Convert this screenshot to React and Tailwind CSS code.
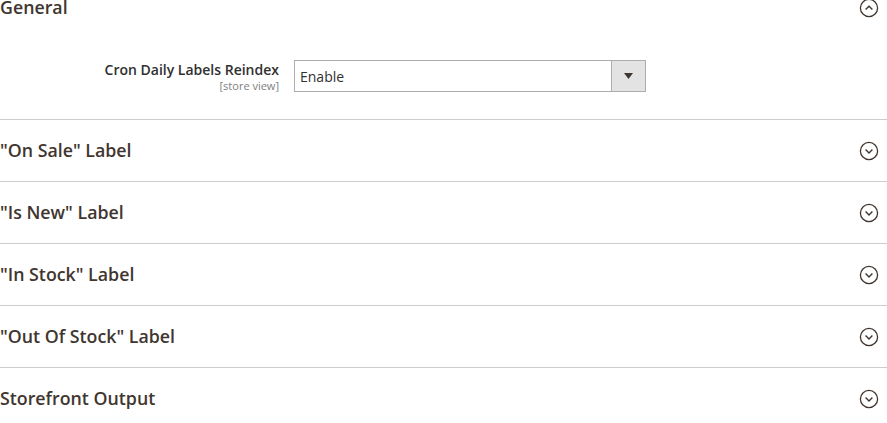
import React from 'react';

const sections = ['"On Sale" Label', '"Is New" Label', '"In Stock" Label', '"Out Of Stock" Label', 'Storefront Output'];

function ToggleIcon({ open }) {
  return (
    <svg width="20" height="20" viewBox="0 0 20 20" className="shrink-0">
      <circle cx="10" cy="10" r="8.6" fill="none" stroke="#41362f" strokeWidth="1.3" />
      {open ? (
        <path d="M6.6 11.6 L10 8.2 L13.4 11.6" fill="none" stroke="#41362f" strokeWidth="1.4" />
      ) : (
        <path d="M6.6 8.6 L10 12 L13.4 8.6" fill="none" stroke="#41362f" strokeWidth="1.4" />
      )}
    </svg>
  );
}

function SectionHeader({ title, open }) {
  return (
    <div className="h-[61px] flex items-center justify-between pr-[8px]">
      <span className="text-[17.8px] font-semibold text-[#41362f]">{title}</span>
      <ToggleIcon open={open} />
    </div>
  );
}

export default function App() {
  return (
    <div className="w-[887px] h-[423px] overflow-hidden bg-white" style={{ fontFamily: '"Open Sans", sans-serif' }}>
      <div className="mt-[-23px]">
        {/* General */}
        <div>
          <SectionHeader title="General" open />
          <div className="flex items-start pt-[22px] pb-[27px]">
            <div className="w-[279px] text-right pt-[1px]">
              <div className="text-[14px] leading-[18px] font-semibold text-[#303030]">Cron Daily Labels Reindex</div>
              <div className="text-[11px] leading-[13px] text-[#808080]">[store view]</div>
            </div>
            <div className="ml-[15px] w-[352px] h-[32px] border border-[#adadad] flex items-stretch">
              <div className="flex-1 flex items-center pl-[5px] text-[14px] text-[#303030]">Enable</div>
              <div className="w-[34px] bg-[#e3e3e3] border-l border-[#adadad] flex items-center justify-center">
                <svg width="9" height="6" viewBox="0 0 9 6">
                  <path d="M0 0 H9 L4.5 6 Z" fill="#41362f" />
                </svg>
              </div>
            </div>
          </div>
        </div>
        {sections.map((s) => (
          <div key={s} className="border-t border-[#cccccc]">
            <SectionHeader title={s} />
          </div>
        ))}
      </div>
    </div>
  );
}
